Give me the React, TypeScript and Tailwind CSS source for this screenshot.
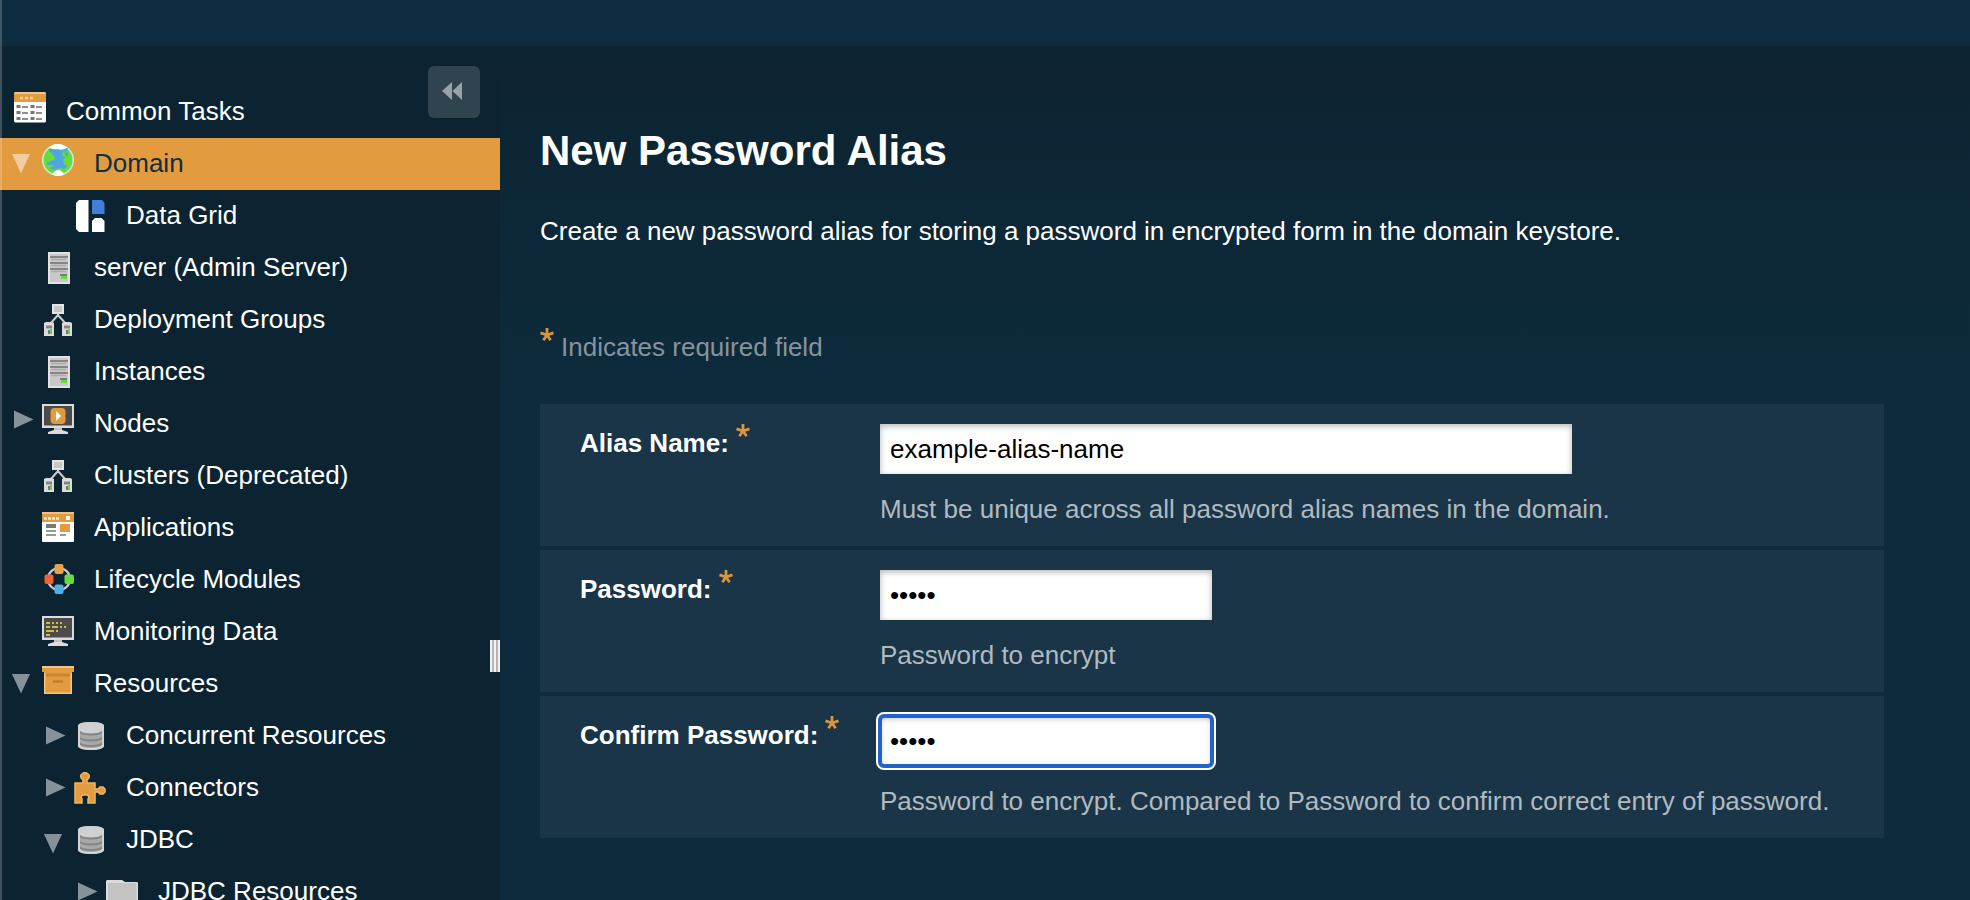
import type { InputHTMLAttributes, ReactNode } from "react";

type IconProps = { children: ReactNode };

function Glyph({ children }: IconProps) {
  return (
    <svg viewBox="0 0 32 32" className="size-8 shrink-0" aria-hidden="true">
      {children}
    </svg>
  );
}

function TasksIcon() {
  return (
    <Glyph>
      <rect x="0" y="0" width="32" height="30.500" rx="1.500" fill="#fff" />
      <path d="M1.500 0H30.500L32 1.500V10H0V1.500Z" fill="#e39b3f" />
      <path d="M1 1H31" stroke="#f0c48c" strokeWidth="2" />
      <path d="M6 6h3M11 6h3M16 6h3" stroke="#f3cf9f" strokeWidth="2.400" />
      <path d="M2.500 14.500h4M16.500 14.500h4M2.500 20.500h4M16.500 20.500h4M2.500 26.500h4M16.500 26.500h4" stroke="#777" strokeWidth="3" />
      <path d="M8 15h6M22 15h6M8 21h6M22 21h6M8 27h6M22 27h6" stroke="#8f8f8f" strokeWidth="2.200" />
    </Glyph>
  );
}

function GlobeIcon() {
  return (
    <Glyph>
      <circle cx="16" cy="16" r="16" fill="#cfeeda" />
      <circle cx="16" cy="16" r="14.500" fill="#69dc3d" />
      <path d="M6 5Q16 6 26 4L25 8Q21 6 20 10Q20 13 24 13L21 16L22 20L26 22L22 25L17 24L12 26L8 24L12 21L5 21L5 19L13 15L12 12L8 8Z" fill="#4fa8dd" />
      <path d="M23 8h3v4h-3z" fill="#4fa8dd" />
      <path d="M7 3.500Q16 -4 25 3.500Q20 7 16 5Q11 6 7 3.500Z" fill="#fff" />
      <path d="M10 30.500Q13 26 16 26Q20 26 22 30.500Q16 33 10 30.500Z" fill="#fff" />
    </Glyph>
  );
}

function GridIcon() {
  return (
    <Glyph>
      <path d="M14.500 0V32H5L2 29V3L5 0Z" fill="#fff" />
      <path d="M18 0H28L30.500 3V14H18Z" fill="#3f7edb" />
      <path d="M18 32V21L21 18H27.500L30.500 21V32Z" fill="#fff" />
    </Glyph>
  );
}

function ServerIcon() {
  return (
    <Glyph>
      <path d="M6 0H28V32H6Z" fill="#e2e2e2" />
      <path d="M8 2H26V30H8Z" fill="#c8c8c8" />
      <path d="M8 5H26M8 11H26M8 17H26" stroke="#858585" strokeWidth="2.200" />
      <path d="M9 7.500H24M9 13.500H24M9 19.500H24" stroke="#aaa" strokeWidth="1.400" />
      <path d="M18 23H25" stroke="#7d7d7d" strokeWidth="2" />
      <path d="M19 25.500H25" stroke="#66d93c" strokeWidth="3" />
    </Glyph>
  );
}

function ClusterIcon() {
  return (
    <Glyph>
      <path d="M16 10V13M16 11L8 20M16 11L24 20" stroke="#c9ccce" strokeWidth="2" fill="none" />
      <path d="M10 0H22V10H10Z" fill="#e4e4e4" />
      <path d="M12 2H20V8H12Z" fill="#c6c6c6" />
      <path d="M2 19L4 18H10L12 19V32H2ZM20 19L22 18H28L30 19V32H20Z" fill="#dcdcdc" />
      <path d="M4 23H10M22 23H28" stroke="#858585" strokeWidth="3" />
      <path d="M6 28H8M24 28H26" stroke="#777" strokeWidth="4" />
      <path d="M9 25V30M27 25V30" stroke="#62d63a" strokeWidth="2" />
    </Glyph>
  );
}

function Monitor({ children }: IconProps) {
  return (
    <Glyph>
      <path d="M0 0H32V24H0Z" fill="#dcdcdc" />
      <path d="M2 2H30V21.500H2Z" fill="#4b4b4b" />
      <path d="M12 24H20V26L26 28V30H6V28L12 26Z" fill="#dcdcdc" />
      <path d="M12 25H20" stroke="#aaa" strokeWidth="1" />
      {children}
    </Glyph>
  );
}

function NodeIcon() {
  return (
    <Monitor>
      <rect x="8.500" y="4" width="15" height="16" rx="4" fill="#e39b3f" />
      <path d="M14 7L19 12L14 17Z" fill="#fff" />
    </Monitor>
  );
}

function MonitoringIcon() {
  return (
    <Monitor>
      <path
        d="M4 7H8M10 7H12M14 7H16M18 7H20M4 11H8M10 11H16M18 11H20M22 11H24M4 15H12M14 15H16M4 19H8"
        stroke="#cdbb3e"
        strokeWidth="2.200"
      />
    </Monitor>
  );
}

function ApplicationIcon() {
  return (
    <Glyph>
      <rect x="0" y="0" width="32" height="30" rx="1" fill="#fff" />
      <path d="M0 0H32V10H0Z" fill="#e39b3f" />
      <path d="M0 1H32" stroke="#efc085" strokeWidth="2" />
      <path d="M2 6.500H18" stroke="#fbe7cf" strokeWidth="2.600" strokeDasharray="3 1" />
      <path d="M24 4H28V8H24Z" fill="#fff" />
      <path d="M4 14H14" stroke="#777" strokeWidth="4" />
      <path d="M4 19H14M4 23H14M18 23H24" stroke="#999" strokeWidth="2" />
      <path d="M18 12H28V20H18Z" fill="#e39b3f" />
    </Glyph>
  );
}

function LifecycleIcon() {
  return (
    <Glyph>
      <circle cx="17" cy="15" r="11" fill="none" stroke="#c9ccce" strokeWidth="2.200" />
      <rect x="12.500" y="0" width="9" height="10" rx="2" fill="#e8a24a" />
      <rect x="2.500" y="10.500" width="9" height="9.500" rx="2" fill="#f0622f" />
      <rect x="22.500" y="10.500" width="9.500" height="9.500" rx="2" fill="#69dc3d" />
      <rect x="12.500" y="20.500" width="9" height="9.500" rx="2" fill="#4fb2e6" />
    </Glyph>
  );
}

function BoxIcon() {
  return (
    <Glyph>
      <path d="M2 8H30V30H2Z" fill="#f0c48c" />
      <path d="M3.500 8H28.500V28.500H3.500Z" fill="#e39b3f" />
      <path d="M0 2H32V8H30V9H2V8H0Z" fill="#e39b3f" />
      <path d="M0 3H32" stroke="#f0c48c" strokeWidth="2" />
      <path d="M4 11H28" stroke="#c9842f" strokeWidth="3" />
      <path d="M11 17.500H21" stroke="#bd7a28" strokeWidth="2.200" />
    </Glyph>
  );
}

function DatabaseIcon() {
  return (
    <Glyph>
      <path d="M4 6Q4 2 17 2Q30 2 30 6V26Q30 30 17 30Q4 30 4 26Z" fill="#a9a9a9" />
      <path d="M4 6Q4 2 17 2Q30 2 30 6V10Q30 14 17 14Q4 14 4 10Z" fill="#d0d0d0" />
      <path d="M5 11Q7 14.500 17 14.500Q27 14.500 29 11M5 17Q7 20.500 17 20.500Q27 20.500 29 17M5 22.500Q7 26 17 26Q27 26 29 22.500" fill="none" stroke="#858585" strokeWidth="1.800" />
      <path d="M5 25.500Q7 29 17 29Q27 29 29 25.500" fill="none" stroke="#d8d8d8" strokeWidth="2" />
      <path d="M5 5V27M29 5V27" stroke="#d4d4d4" strokeWidth="2" />
    </Glyph>
  );
}

function PuzzleIcon() {
  return (
    <Glyph>
      <path
        d="M1 11H9V7.500Q6 6 7 3L10 0.500H12L15 3Q16 6 13 7.500V11H21V17H24L26 15H29L31 17V20L29 22H26L24 20H21V31H14V27Q16 24 13 23H9Q6 24 8 27V31H1Z"
        fill="#e39b3f"
        stroke="#f0b566"
        strokeWidth="1.500"
      />
    </Glyph>
  );
}

function FolderIcon() {
  return (
    <Glyph>
      <path d="M0 5L1 4H16L19 6H31L32 7V32H0Z" fill="#dcdcdc" />
      <path d="M2 7H30.500V32H2Z" fill="#c3c3c3" />
    </Glyph>
  );
}

function Arrow({ state, light }: { state?: "open" | "closed"; light?: boolean }) {
  return (
    <Glyph>
      {state === "open" && <path d="M2 10H20L11 29.500Z" fill={light ? "#f1cd9f" : "#86929a"} />}
      {state === "closed" && <path d="M4 6.500V24.500L23.500 15.500Z" fill="#86929a" />}
    </Glyph>
  );
}

type Node = {
  label: string;
  icon: ReactNode;
  level?: 1 | 2 | 3;
  state?: "open" | "closed";
  selected?: boolean;
};

const nodes: Node[] = [
  { label: "Domain", icon: <GlobeIcon />, state: "open", selected: true },
  { label: "Data Grid", icon: <GridIcon />, level: 2 },
  { label: "server (Admin Server)", icon: <ServerIcon /> },
  { label: "Deployment Groups", icon: <ClusterIcon /> },
  { label: "Instances", icon: <ServerIcon /> },
  { label: "Nodes", icon: <NodeIcon />, state: "closed" },
  { label: "Clusters (Deprecated)", icon: <ClusterIcon /> },
  { label: "Applications", icon: <ApplicationIcon /> },
  { label: "Lifecycle Modules", icon: <LifecycleIcon /> },
  { label: "Monitoring Data", icon: <MonitoringIcon /> },
  { label: "Resources", icon: <BoxIcon />, state: "open" },
  { label: "Concurrent Resources", icon: <DatabaseIcon />, level: 2, state: "closed" },
  { label: "Connectors", icon: <PuzzleIcon />, level: 2, state: "closed" },
  { label: "JDBC", icon: <DatabaseIcon />, level: 2, state: "open" },
  { label: "JDBC Resources", icon: <FolderIcon />, level: 3, state: "closed" },
];

const indents = { 1: "pl-[10px]", 2: "pl-[42px]", 3: "pl-[74px]" };

function TreeRow({ label, icon, level = 1, state, selected }: Node) {
  const raised = level === 1 && state;
  return (
    <li>
      <a
        href="#"
        aria-current={selected ? "page" : undefined}
        className={`flex h-13 items-start gap-5 ${indents[level]} ${
          selected ? "bg-[#e39b3f] text-[#0e2d40]" : "text-white"
        }`}
      >
        <span className={`flex ${raised ? "pt-[6px]" : "pt-[10px]"}`}>
          <Arrow state={state} light={selected} />
          {icon}
        </span>
        <span className="leading-[50px] whitespace-nowrap">{label}</span>
      </a>
    </li>
  );
}

function Sidebar() {
  return (
    <aside className="relative w-[500px] shrink-0 overflow-hidden bg-[#0c2431]">
      <nav aria-label="Server tree" className="pt-10">
        <a href="#" className="flex h-13 items-start gap-5 pl-[14px] text-white">
          <span className="pt-[6px]">
            <TasksIcon />
          </span>
          <span className="leading-[50px]">Common Tasks</span>
        </a>
        <ul>
          {nodes.map((node) => (
            <TreeRow key={node.label} {...node} />
          ))}
        </ul>
      </nav>
      <button
        type="button"
        aria-label="Collapse sidebar"
        className="absolute top-5 right-5 flex size-13 items-center rounded-md bg-[#304450] pb-[2px] pl-[14px]"
      >
        <svg viewBox="0 0 20 18" className="h-[18px] w-5" aria-hidden="true">
          <path d="M10 0V18L0 9ZM20 0V18L10.500 9Z" fill="#98a2a8" />
        </svg>
      </button>
      <div
        role="separator"
        aria-orientation="vertical"
        className="absolute top-[594px] right-0 flex h-8 w-[10px] gap-[2px] bg-[#f2f2f2] px-[2px]"
      >
        <span className="w-[2px] bg-[#b5b5b5]" />
        <span className="w-[2px] bg-[#b5b5b5]" />
      </div>
    </aside>
  );
}

function Star() {
  return (
    <svg viewBox="0 0 14 14" className="size-[14px] shrink-0" aria-hidden="true">
      <path
        d="M7 7V0M7 7L0.500 4.800M7 7L13.500 4.800M7 7L3.400 12.200M7 7L10.600 12.200"
        stroke="#d9963f"
        strokeWidth="2.800"
        fill="none"
      />
    </svg>
  );
}

type FieldProps = InputHTMLAttributes<HTMLInputElement> & {
  id: string;
  label: string;
  help: string;
  wide?: boolean;
  focused?: boolean;
};

function Field({ id, label, help, wide, focused, ...input }: FieldProps) {
  return (
    <div className="flex bg-[#1a3547] pt-5 pb-[22px] pl-10">
      <label htmlFor={id} className="flex w-[300px] shrink-0 items-start gap-[7px] font-bold text-white">
        <span className="pt-1 leading-[30px]">{label}</span>
        <Star />
      </label>
      <div className="min-w-0 flex-1">
        <input
          id={id}
          aria-describedby={`${id}-help`}
          required
          className={`block h-[50px] max-w-full bg-white px-[10px] text-black ${wide ? "w-[692px]" : "w-[332px]"} ${
            focused
              ? "rounded-[4px] shadow-[inset_0_2px_6px_rgba(0,0,0,0.3),0_0_0_4px_#fff] outline-4 -outline-offset-2 outline-[#2262c9] outline-solid"
              : "shadow-[inset_0_2px_6px_rgba(0,0,0,0.3)] outline-none"
          }`}
          {...input}
        />
        <p id={`${id}-help`} className="pt-5 leading-[30px] text-[#b0bac0]">
          {help}
        </p>
      </div>
    </div>
  );
}

export default function App() {
  return (
    <div className="relative flex h-screen flex-col overflow-hidden bg-[#0d2b3d] font-['Liberation_Sans',Arial,sans-serif] text-[26px]">
      <header className="h-[46px] shrink-0 bg-[#0e2d40]" />
      <div className="flex min-h-0 flex-1">
        <Sidebar />
        <main className="min-w-0 flex-1 bg-[linear-gradient(#0c2431,#0d2b3d_360px)] pt-20 pr-[86px] pl-10">
          <h1 className="text-[42px] leading-[50px] font-bold text-white">New Password Alias</h1>
          <p className="pt-10 leading-[30px] text-white">
            Create a new password alias for storing a password in encrypted form in the domain keystore.
          </p>
          <p className="flex items-start gap-[7px] pt-[82px] text-[#86949d]">
            <Star />
            <span className="pt-1 leading-[30px]">Indicates required field</span>
          </p>
          <form className="flex flex-col gap-1 pt-[42px]">
            <Field
              id="alias"
              label="Alias Name:"
              type="text"
              defaultValue="example-alias-name"
              help="Must be unique across all password alias names in the domain."
              wide
            />
            <Field id="password" label="Password:" type="password" defaultValue="admin" help="Password to encrypt" />
            <Field
              id="confirm"
              label="Confirm Password:"
              type="password"
              defaultValue="admin"
              help="Password to encrypt. Compared to Password to confirm correct entry of password."
              focused
            />
          </form>
        </main>
      </div>
      <div className="pointer-events-none absolute inset-y-0 left-0 w-[2px] bg-white/20" />
    </div>
  );
}
